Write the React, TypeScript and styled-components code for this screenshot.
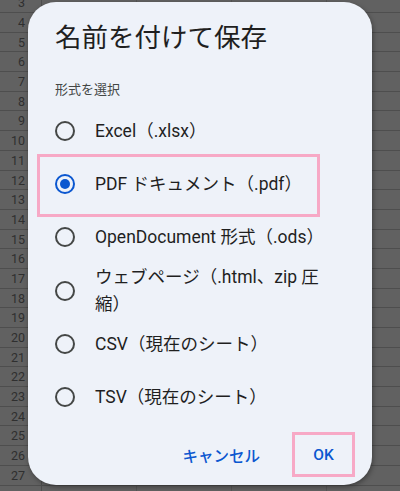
import * as React from "react";
import styled, { createGlobalStyle, css } from "styled-components";

const GlobalStyle = createGlobalStyle`
    html, body {
        margin: 0;
        padding: 0;
        width: 400px;
        height: 491px;
        overflow: hidden;
        background: #616161;
        font-family: "Roboto", "Noto Sans CJK JP", sans-serif;
    }
`;

// spreadsheet behind the dialog
const Sheet = styled.div`
    margin-top: -6.7px;
    display: flex;
    flex-direction: column;
`;

const SheetRow = styled.div`
    display: grid;
    grid-template-columns: 42px repeat(4, 95px);
    height: 19.7px;
    box-sizing: border-box;
    border-bottom: 1px solid #4e4e4e;
`;

const RowNumber = styled.div`
    border-right: 1px solid #4e4e4e;
    padding-right: 16px;
    text-align: right;
    font-size: 12.5px;
    line-height: 19px;
    color: #2f2f2f;
`;

const Cell = styled.div`
    border-right: 1px solid #555555;
`;

// dialog
const Dialog = styled.div`
    position: absolute;
    left: 28px;
    top: 2px;
    width: 344px;
    height: 483px;
    box-sizing: border-box;
    padding: 20px 38px 8px 27px;
    background: #eef2f9;
    border-radius: 28px;
    box-shadow: 1px 2px 5px rgba(0, 0, 0, 0.35);
    display: flex;
    flex-direction: column;
`;

const Title = styled.h2`
    margin: 0;
    font-size: 26.5px;
    font-weight: 400;
    line-height: 32px;
    color: #1f1f1f;
`;

const Caption = styled.div`
    margin-top: 26px;
    font-size: 13px;
    line-height: 20px;
    color: #444746;
`;

const Options = styled.div`
    margin-top: 4.5px;
    display: flex;
    flex-direction: column;
`;

const Option = styled.label<{ $marked?: boolean }>`
    position: relative;
    min-height: 53px;
    display: flex;
    align-items: center;
    gap: 20px;
    cursor: pointer;

    ${(p) =>
        p.$marked &&
        css`
            &::after {
                content: "";
                position: absolute;
                left: -18px;
                right: 14px;
                top: -3.5px;
                bottom: -6.5px;
                border: 3px solid #f7a9c6;
                pointer-events: none;
            }
        `}
`;

const Radio = styled.span<{ $checked?: boolean }>`
    flex: none;
    width: 20px;
    height: 20px;
    box-sizing: border-box;
    border-radius: 50%;
    border: 2.2px solid ${(p) => (p.$checked ? "#0b57d0" : "#444746")};
    display: flex;
    align-items: center;
    justify-content: center;

    &::before {
        content: "";
        width: 10px;
        height: 10px;
        border-radius: 50%;
        background: #0b57d0;
        display: ${(p) => (p.$checked ? "block" : "none")};
    }
`;

const OptionText = styled.span`
    font-size: 17.5px;
    line-height: 27px;
    color: #1f1f1f;
`;

const Actions = styled.div`
    margin-top: auto;
    margin-right: -21px;
    display: flex;
    justify-content: flex-end;
    gap: 17px;
`;

const TextButton = styled.button<{ $marked?: boolean }>`
    height: 45px;
    min-width: 63px;
    padding: 0 12px;
    box-sizing: border-box;
    background: transparent;
    border: 3px solid ${(p) => (p.$marked ? "#f7a9c6" : "transparent")};
    font-family: inherit;
    font-size: 15.5px;
    font-weight: 500;
    color: #0b57d0;
    cursor: pointer;
`;

const formats = [
    "Excel（.xlsx）",
    "PDF ドキュメント（.pdf）",
    "OpenDocument 形式（.ods）",
    "ウェブページ（.html、zip 圧縮）",
    "CSV（現在のシート）",
    "TSV（現在のシート）",
];

const rows = Array.from({ length: 26 }, (_, i) => i + 3);

const App = () => {
    const selected = 1;
    return (
        <>
            <GlobalStyle />
            <Sheet>
                {rows.map((n) => (
                    <SheetRow key={n}>
                        <RowNumber>{n}</RowNumber>
                        <Cell />
                        <Cell />
                        <Cell />
                        <Cell />
                    </SheetRow>
                ))}
            </Sheet>
            <Dialog>
                <Title>名前を付けて保存</Title>
                <Caption>形式を選択</Caption>
                <Options>
                    {formats.map((f, i) => (
                        <Option key={f} $marked={i === selected}>
                            <Radio $checked={i === selected} />
                            <OptionText>{f}</OptionText>
                        </Option>
                    ))}
                </Options>
                <Actions>
                    <TextButton>キャンセル</TextButton>
                    <TextButton $marked>OK</TextButton>
                </Actions>
            </Dialog>
        </>
    );
};

export default App;
